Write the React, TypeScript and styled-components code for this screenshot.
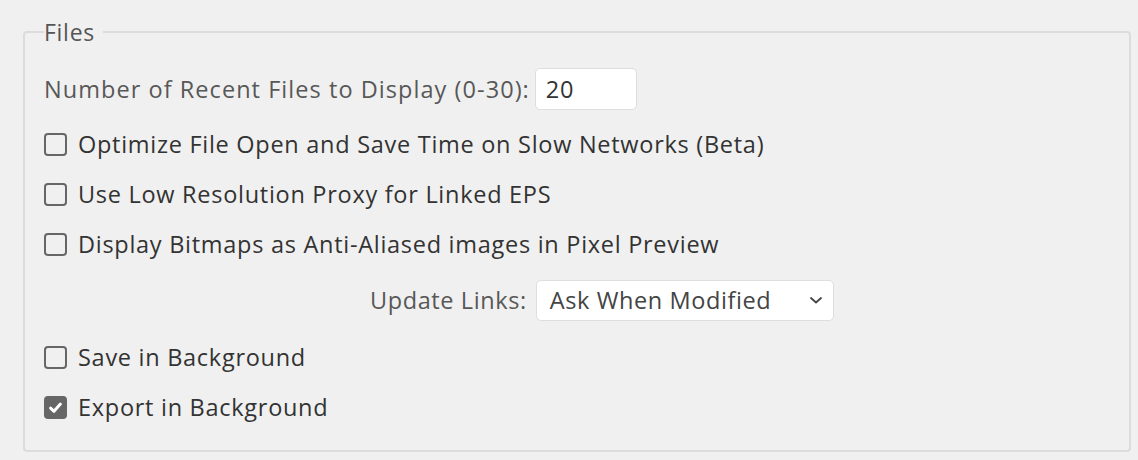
import * as React from "react";
import styled, { createGlobalStyle } from "styled-components";

const GlobalStyle = createGlobalStyle`
	html, body {
		margin: 0;
		padding: 0;
		background: #f0f0f0;
	}
	body {
		font-family: "Open Sans", "Liberation Sans", sans-serif;
	}
`;

const options = [
	{ label: "Optimize File Open and Save Time on Slow Networks (Beta)", checked: false },
	{ label: "Use Low Resolution Proxy for Linked EPS", checked: false },
	{ label: "Display Bitmaps as Anti-Aliased images in Pixel Preview", checked: false },
];

const background = [
	{ label: "Save in Background", checked: false },
	{ label: "Export in Background", checked: true },
];

const Check = ({ label, checked }: { label: string; checked: boolean }) => (
	<CheckRow>
		<Box checked={checked}>
			{checked && (
				<svg width="17" height="17" viewBox="0 0 16 16">
					<path d="M3.4 8.6 L6.6 11.6 L12.6 4.8" fill="none" stroke="#fff" strokeWidth="2.8" strokeLinecap="round" strokeLinejoin="round" />
				</svg>
			)}
		</Box>
		<CheckLabel>{label}</CheckLabel>
	</CheckRow>
);

export default function App() {
	return (
		<Page>
			<GlobalStyle />
			<Group>
				<Legend>Files</Legend>
				<FieldRow>
					<Label wide>Number of Recent Files to Display (0-30):</Label>
					<NumberInput>20</NumberInput>
				</FieldRow>
				<Checks>
					{options.map(o => (
						<Check key={o.label} {...o} />
					))}
				</Checks>
				<SelectRow>
					<Label>Update Links:</Label>
					<Select>
						<span>Ask When Modified</span>
						<svg width="14" height="10" viewBox="0 0 14 10">
							<path d="M2 3 L7 7.5 L12 3" fill="none" stroke="#444" strokeWidth="1.8" strokeLinecap="round" strokeLinejoin="round" />
						</svg>
					</Select>
				</SelectRow>
				<Checks>
					{background.map(o => (
						<Check key={o.label} {...o} />
					))}
				</Checks>
			</Group>
		</Page>
	);
}

const Page = styled.div`
	width: 1138px;
	height: 460px;
	box-sizing: border-box;
	padding: 20px 8px 8px 23px;
	background: #f0f0f0;
`;

const Group = styled.fieldset`
	margin: 0;
	box-sizing: border-box;
	width: 1108px;
	height: 432px;
	border: 2px solid #dcdcdc;
	border-radius: 4px;
	padding: 0 20px 0 19px;
	display: flex;
	flex-direction: column;
	letter-spacing: 0.72px;
`;

const Legend = styled.legend`
	padding: 0 8px 0 0;
	margin-left: 0;
	font-size: 23px;
	color: #555;
	line-height: 24px;
`;

const Label = styled.span<{ wide?: boolean }>`
	font-size: 23.5px;
	color: #585858;
	white-space: nowrap;
	letter-spacing: ${p => (p.wide ? "1.05px" : "0.6px")};
`;

const FieldRow = styled.div`
	display: flex;
	align-items: center;
	gap: 5px;
	margin-top: 24px;
	height: 42px;
`;

const NumberInput = styled.div`
	box-sizing: border-box;
	width: 102px;
	height: 42px;
	background: #fff;
	border: 1.5px solid #dedede;
	border-radius: 5px;
	padding-left: 10px;
	display: flex;
	align-items: center;
	font-size: 23.5px;
	color: #333;
`;

const Checks = styled.div`
	display: flex;
	flex-direction: column;
	margin-top: 9px;
`;

const CheckRow = styled.label`
	display: flex;
	align-items: center;
	gap: 11px;
	height: 50px;
`;

const Box = styled.span<{ checked: boolean }>`
	box-sizing: border-box;
	width: 23px;
	height: 23px;
	border-radius: 4px;
	border: 2px solid #666;
	background: ${p => (p.checked ? "#666" : "transparent")};
	display: flex;
	align-items: center;
	justify-content: center;
	flex-shrink: 0;
`;

const CheckLabel = styled.span`
	font-size: 23.5px;
	color: #333;
	white-space: nowrap;
`;

const SelectRow = styled.div`
	display: flex;
	align-items: center;
	gap: 9px;
	padding-left: 326px;
	height: 62px;
	margin-bottom: -8px;
`;

const Select = styled.div`
	box-sizing: border-box;
	width: 298px;
	height: 41px;
	background: #fff;
	border: 1.5px solid #dedede;
	border-radius: 5px;
	padding: 0 10px 0 13px;
	display: flex;
	align-items: center;
	justify-content: space-between;
	font-size: 23.5px;
	color: #444;
	letter-spacing: 0.6px;
`;
